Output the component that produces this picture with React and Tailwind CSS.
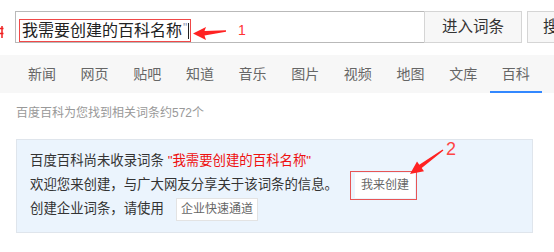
import React from "react";

const navItems = ["新闻", "网页", "贴吧", "知道", "音乐", "图片", "视频", "地图", "文库", "百科"];

export default function App() {
  return (
    <div className="relative w-[554px] h-[252px] overflow-hidden bg-white font-['Liberation_Sans','Noto_Sans_CJK_SC',sans-serif]">
      {/* search row */}
      <div className="flex pt-[11px] pl-[15px] h-[44px]">
        <div className="shrink-0 w-[409px] h-[32px] border border-[#b9b9b9] border-r-0">
          <div className="ml-[3px] mt-[7px] w-[172px] h-[23px] border border-[#f04848] flex items-center pl-[2px] text-[16px] leading-none text-[#222]">
            我需要创建的百科名称
            <span className="text-[#8a94b0] text-[12px] ml-[1px] -mt-[6px]">"</span>
            <span className="w-px h-[16px] bg-[#222] ml-[1px]"></span>
          </div>
        </div>
        <button className="shrink-0 w-[98px] h-[32px] border border-[#d5d5d5] bg-[#f7f7f7] text-[15.5px] text-[#333] flex items-center justify-center">
          进入词条
        </button>
        <button className="shrink-0 ml-[5px] w-[60px] h-[32px] border border-[#d5d5d5] bg-[#f7f7f7] text-[15.5px] text-[#333] flex items-center pl-[15px] whitespace-nowrap">
          搜索
        </button>
      </div>

      {/* nav */}
      <div className="mt-[11px] h-[38px] bg-[#f7f7f7] flex pl-[15.6px]">
        {navItems.map((n) => (
          <div
            key={n}
            className={
              n === "百科"
                ? "shrink-0 w-[52.67px] h-full pt-[2px] border-b-2 border-[#3388ff] flex items-center justify-center text-[14px] text-[#666]"
                : "shrink-0 w-[52.67px] h-full pt-[2px] border-b-2 border-transparent flex items-center justify-center text-[14px] text-[#666]"
            }
          >
            {n}
          </div>
        ))}
      </div>

      {/* count */}
      <div className="h-[46px] pt-[13px] pl-[16px] text-[12px] leading-[14px] text-[#999]">
        百度百科为您找到相关词条约572个
      </div>

      {/* not found box */}
      <div className="ml-[16px] w-[517px] h-[94px] border border-[#dfe5ec] bg-[#ebf4fd] pt-[9px] pl-[13px] text-[13.4px] text-[#333]">
        <div className="h-[24px] flex items-center">
          百度百科尚未收录词条&nbsp;<span className="text-[#ee1111]">"我需要创建的百科名称"</span>
        </div>
        <div className="h-[24px] flex items-center">
          欢迎您来创建，与广大网友分享关于该词条的信息。
          <div className="ml-[12px] w-[67px] h-[29px] border border-[#e85555] flex items-center pl-[4px]">
            <div className="w-[60px] h-[25px] bg-white flex items-center justify-center text-[12px] text-[#666]">
              我来创建
            </div>
          </div>
        </div>
        <div className="h-[24px] flex items-center">
          创建企业词条，请使用
          <div className="ml-[12px] w-[82px] h-[23px] bg-white border border-[#e3e3e3] flex items-center justify-center text-[12px] text-[#666]">
            企业快速通道
          </div>
        </div>
      </div>

      {/* annotations */}
      <svg className="absolute left-0 top-0 pointer-events-none" width="554" height="252" viewBox="0 0 554 252">
        <path d="M2 26 L2 38 M0 28.5 L3.5 28.5 M0 33.5 L3.5 33.5" stroke="#f02020" strokeWidth="1.5" fill="none" />
        <polygon points="193,33.5 206,27 204.5,31 226,30.2 226,31.8 204.5,35.5 206,40" fill="#f22" />
        <polygon points="410,174 424,171.2 421.7,168 443.4,150.6 442.6,149.4 419.3,164.8 417,161.6" fill="#f22" />
      </svg>
      <span className="absolute left-[238px] top-[23px] text-[14px] leading-[14px] text-[#f33]">1</span>
      <span className="absolute left-[446px] top-[140px] text-[18px] leading-[18px] text-[#f44]">2</span>
    </div>
  );
}
